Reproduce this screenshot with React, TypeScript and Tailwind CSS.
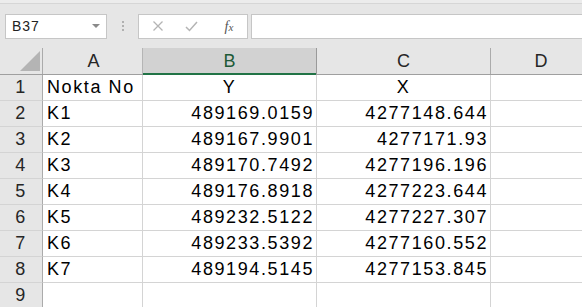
import React from "react";

const rows: [string, string, string][] = [
    ["K1", "489169.0159", "4277148.644"],
    ["K2", "489167.9901", "4277171.93"],
    ["K3", "489170.7492", "4277196.196"],
    ["K4", "489176.8918", "4277223.644"],
    ["K5", "489232.5122", "4277227.307"],
    ["K6", "489233.5392", "4277160.552"],
    ["K7", "489194.5145", "4277153.845"],
];

const cell = "h-[26px] border-b border-r border-[#d4d4d4] flex items-center text-[18px] tracking-[1.6px] text-black";
const rowHead = "h-[26px] w-[43px] shrink-0 border-b border-r border-b-[#d4d4d4] border-r-[#ababab] bg-[#e6e6e6] flex items-center justify-center text-[18px] tracking-[1.6px] text-[#262626]";

function FormulaBar() {
    return (
        <div className="h-[44px] flex items-center bg-[#e6e6e6]">
            <div className="ml-[5px] w-[102px] h-[25px] bg-white border border-[#c6c6c6] flex items-center pl-[6px] pr-[6px]">
                <span className="text-[14px] tracking-[1px] text-[#222]">B37</span>
                <span className="ml-auto w-0 h-0 border-l-[4px] border-r-[4px] border-t-[4px] border-l-transparent border-r-transparent border-t-[#8a8a8a]" />
            </div>
            <div className="w-[31px] flex flex-col items-center gap-[2px]">
                <span className="w-[2px] h-[2px] bg-[#b0b0b0]" />
                <span className="w-[2px] h-[2px] bg-[#b0b0b0]" />
                <span className="w-[2px] h-[2px] bg-[#b0b0b0]" />
            </div>
            <div className="w-[110px] h-[25px] bg-white border border-[#c6c6c6] flex items-center">
                <div className="w-[38px] flex justify-center">
                    <svg width="12" height="12" viewBox="0 0 12 12">
                        <path d="M1.5 1.5 L10.5 10.5 M10.5 1.5 L1.5 10.5" stroke="#b4b4b4" strokeWidth="1.3" />
                    </svg>
                </div>
                <div className="w-[28px] flex justify-center">
                    <svg width="13" height="11" viewBox="0 0 13 11">
                        <path d="M1 6 L4.5 9.5 L12 1" stroke="#b4b4b4" strokeWidth="1.5" fill="none" />
                    </svg>
                </div>
                <div className="flex-1 flex justify-center pl-[6px]">
                    <span className="italic text-[14px] text-[#555]" style={{ fontFamily: '"Liberation Serif", serif' }}>
                        f<span className="text-[11px]">x</span>
                    </span>
                </div>
            </div>
            <div className="ml-[3px] flex-1 h-[25px] bg-white border border-r-0 border-[#c6c6c6]" />
        </div>
    );
}

export default function App() {
    return (
        <div className="w-[582px] h-[307px] overflow-hidden bg-white" style={{ fontFamily: '"Liberation Sans", Arial, sans-serif' }}>
            <div className="h-[4px] bg-[#ececec] border-b border-[#d6d6d6]" />
            <FormulaBar />

            {/* column headers */}
            <div className="flex h-[27px] bg-[#e6e6e6] border-b border-[#9f9f9f]">
                <div className="w-[43px] shrink-0 border-r border-[#ababab] relative">
                    <svg className="absolute left-[20px] top-[3px]" width="20" height="20" viewBox="0 0 20 20">
                        <path d="M20 0 L20 20 L0 20 Z" fill="#b4b4b4" />
                    </svg>
                </div>
                <div className="w-[100px] shrink-0 border-r border-[#b5b5b5] flex items-center justify-center text-[18px] text-[#262626] pl-[2px]">A</div>
                <div className="w-[174px] shrink-0 border-r border-[#9a9a9a] bg-[#d2d2d2] relative flex items-center justify-center text-[18px] text-[#1e5a37]">
                    B
                    <div className="absolute left-0 right-0 bottom-[-1px] h-[2px] bg-[#217346]" />
                </div>
                <div className="w-[174px] shrink-0 border-r border-[#ababab] flex items-center justify-center text-[18px] text-[#262626]">C</div>
                <div className="w-[100px] shrink-0 flex items-center justify-center text-[18px] text-[#262626]">D</div>
            </div>

            {/* row 1 */}
            <div className="flex">
                <div className={rowHead}>1</div>
                <div className={`${cell} w-[100px] shrink-0 pl-[4px]`}>Nokta No</div>
                <div className={`${cell} w-[174px] shrink-0 justify-center`}>Y</div>
                <div className={`${cell} w-[174px] shrink-0 justify-center`}>X</div>
                <div className={`${cell} flex-1 border-r-0`} />
            </div>

            {rows.map((r, i) => (
                <div key={r[0]} className="flex">
                    <div className={rowHead}>{i + 2}</div>
                    <div className={`${cell} w-[100px] shrink-0 pl-[4px]`}>{r[0]}</div>
                    <div className={`${cell} w-[174px] shrink-0 justify-end pr-[2px]`}>{r[1]}</div>
                    <div className={`${cell} w-[174px] shrink-0 justify-end pr-[2px]`}>{r[2]}</div>
                    <div className={`${cell} flex-1 border-r-0`} />
                </div>
            ))}

            <div className="flex">
                <div className={rowHead}>9</div>
                <div className={`${cell} w-[100px] shrink-0`} />
                <div className={`${cell} w-[174px] shrink-0`} />
                <div className={`${cell} w-[174px] shrink-0`} />
                <div className={`${cell} flex-1 border-r-0`} />
            </div>
        </div>
    );
}
